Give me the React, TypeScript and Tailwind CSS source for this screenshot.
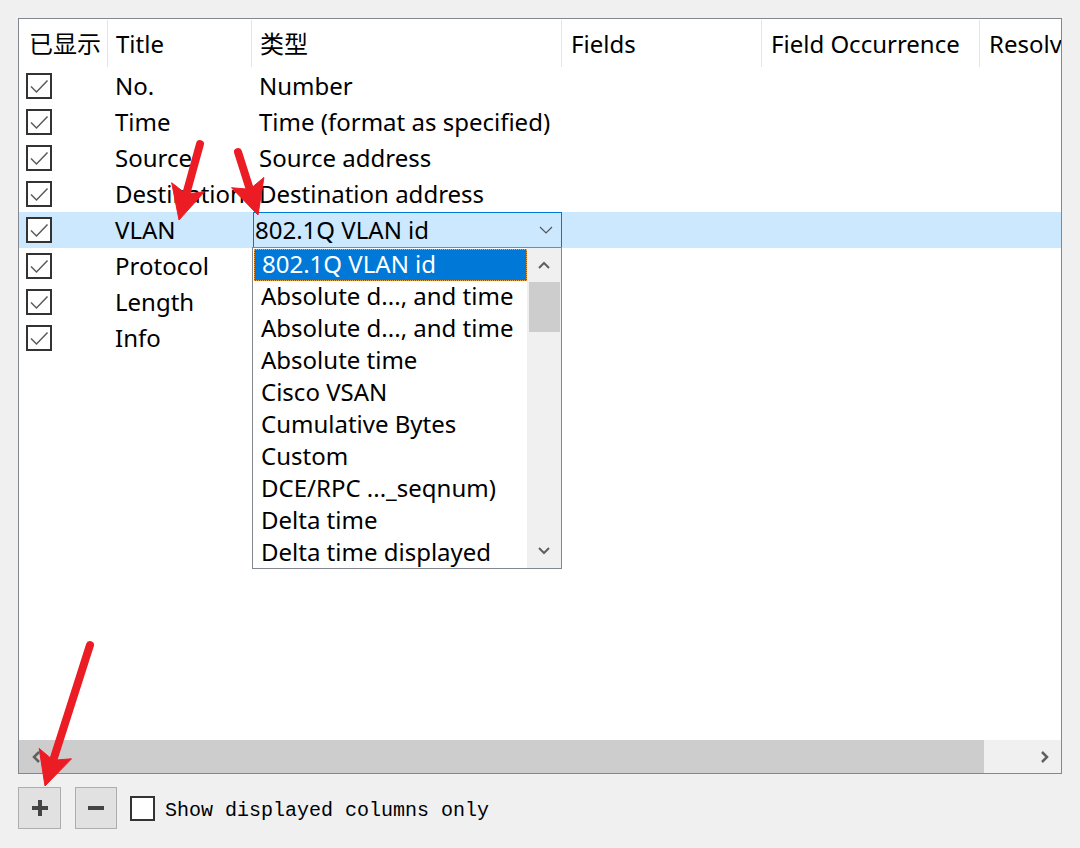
const sans = { fontFamily: '"Noto Sans", "Noto Sans CJK SC", sans-serif' }

interface Row {
  title: string
  type: string
}

const rows: Row[] = [
  { title: 'No.', type: 'Number' },
  { title: 'Time', type: 'Time (format as specified)' },
  { title: 'Source', type: 'Source address' },
  { title: 'Destination', type: 'Destination address' },
  { title: 'VLAN', type: '802.1Q VLAN id' },
  { title: 'Protocol', type: '' },
  { title: 'Length', type: '' },
  { title: 'Info', type: '' },
]

const options = [
  '802.1Q VLAN id',
  'Absolute d..., and time',
  'Absolute d..., and time',
  'Absolute time',
  'Cisco VSAN',
  'Cumulative Bytes',
  'Custom',
  'DCE/RPC ..._seqnum)',
  'Delta time',
  'Delta time displayed',
]

const headers = [
  { label: '已显示', w: 'w-[89px]', pl: 'pl-[10px]' },
  { label: 'Title', w: 'w-[144px]', pl: 'pl-[8px]' },
  { label: '类型', w: 'w-[310px]', pl: 'pl-[8px]' },
  { label: 'Fields', w: 'w-[200px]', pl: 'pl-[9px]' },
  { label: 'Field Occurrence', w: 'w-[218px]', pl: 'pl-[9px]' },
]

const CheckBox = ({ checked }: { checked: boolean }) => (
  <div className="w-[26px] h-[26px] border-2 border-[#333333] bg-white flex items-center justify-center">
    {checked && (
      <svg width="20" height="20" viewBox="0 0 20 20" fill="none">
        <path d="M2 10.5 L7.5 16 L18.5 4.5" stroke="#5a5a5a" strokeWidth="1.5" />
      </svg>
    )}
  </div>
)

// red annotation arrow, tail -> tip
const Arrow = ({ x1, y1, x2, y2 }: { x1: number; y1: number; x2: number; y2: number }) => {
  const len = Math.hypot(x2 - x1, y2 - y1)
  const dx = (x2 - x1) / len
  const dy = (y2 - y1) / len
  const nx = -dy
  const ny = dx
  const head = 34
  const half = 17
  const bx = x2 - dx * head
  const by = y2 - dy * head
  const ix = bx + dx * 7
  const iy = by + dy * 7
  const pts = [
    [x2, y2],
    [bx + nx * half, by + ny * half],
    [ix, iy],
    [bx - nx * half, by - ny * half],
  ]
    .map((p) => p.join(','))
    .join(' ')
  return (
    <g fill="#ec1c24" stroke="#ec1c24">
      <line x1={x1} y1={y1} x2={ix} y2={iy} strokeWidth="8" strokeLinecap="round" />
      <polygon points={pts} strokeWidth="1" strokeLinejoin="round" />
    </g>
  )
}

const App = () => {
  return (
    <div className="relative w-[1080px] h-[848px] bg-[#f0f0f0] overflow-hidden pt-[18px] pl-[18px] text-black" style={sans}>
      {/* Table panel */}
      <div className="w-[1044px] h-[756px] border border-[#828790] bg-white flex flex-col">
        {/* Header */}
        <div className="flex h-[49px] shrink-0 text-[24px]">
          {headers.map((h) => (
            <div key={h.label} className={`${h.w} flex items-center justify-between shrink-0`}>
              <span className={`${h.pl} whitespace-nowrap`}>{h.label}</span>
              <div className="w-px h-[47px] bg-[#e5e5e5]" />
            </div>
          ))}
          <div className="flex-1 flex items-center overflow-hidden">
            <span className="pl-[9px] whitespace-nowrap">Resolved</span>
          </div>
        </div>

        {/* Body */}
        <div className="relative flex-1 text-[24px]">
          {rows.map((r) => {
            const selected = r.title === 'VLAN'
            return (
              <div key={r.title} className={`flex h-[36px] items-center ${selected ? 'bg-[#cce8ff]' : ''}`}>
                <div className="w-[89px] pl-[7px] shrink-0">
                  <CheckBox checked />
                </div>
                <div className="w-[144px] pl-[7px] shrink-0 whitespace-nowrap overflow-hidden">{r.title}</div>
                {selected ? (
                  <div className="w-[310px] shrink-0 pl-px h-[36px]">
                    <div className="h-[36px] w-[309px] border border-[#0078d7] bg-[#cce8ff] flex items-center justify-between pl-px pr-[8px]">
                      <span className="whitespace-nowrap">{r.type}</span>
                      <svg width="14" height="8" viewBox="0 0 14 8" fill="none">
                        <path d="M1 1 L7 7 L13 1" stroke="#555" strokeWidth="1.2" />
                      </svg>
                    </div>
                  </div>
                ) : (
                  <div className="w-[310px] pl-[7px] shrink-0 whitespace-nowrap">{r.type}</div>
                )}
              </div>
            )
          })}

          {/* Open dropdown list */}
          <div className="absolute left-[233px] top-[179px] w-[310px] h-[322px] border border-[#828790] bg-white flex">
            <div className="flex-1 pt-px pl-px">
              {options.map((o, i) => (
                <div
                  key={i}
                  className={`h-[32px] flex items-center pl-[7px] pb-[3px] whitespace-nowrap ${
                    i === 0 ? 'bg-[#0078d7] text-white border border-dotted border-[#f0a040] pl-[6px]' : ''
                  }`}
                >
                  {o}
                </div>
              ))}
            </div>
            <div className="w-[34px] bg-[#f0f0f0] flex flex-col items-center">
              <div className="h-[34px] w-full flex items-center justify-center">
                <svg width="12" height="8" viewBox="0 0 12 8" fill="none">
                  <path d="M1 7 L6 2 L11 7" stroke="#606060" strokeWidth="2" />
                </svg>
              </div>
              <div className="h-[50px] w-[31px] bg-[#cdcdcd]" />
              <div className="flex-1" />
              <div className="h-[34px] w-full flex items-center justify-center">
                <svg width="12" height="8" viewBox="0 0 12 8" fill="none">
                  <path d="M1 1 L6 6 L11 1" stroke="#606060" strokeWidth="2" />
                </svg>
              </div>
            </div>
          </div>
        </div>

        {/* Horizontal scrollbar */}
        <div className="h-[33px] shrink-0 flex bg-[#f0f0f0]">
          <div className="w-[33px] bg-[#cdcdcd] flex items-center justify-center">
            <svg width="10" height="12" viewBox="0 0 10 12" fill="none">
              <path d="M8 1 L3 6 L8 11" stroke="#606060" strokeWidth="2.5" />
            </svg>
          </div>
          <div className="w-[932px] bg-[#cdcdcd]" />
          <div className="flex-1 flex justify-end">
            <div className="w-[33px] flex items-center justify-center">
              <svg width="10" height="12" viewBox="0 0 10 12" fill="none">
                <path d="M2 1 L7 6 L2 11" stroke="#606060" strokeWidth="2.5" />
              </svg>
            </div>
          </div>
        </div>
      </div>

      {/* Bottom controls */}
      <div className="flex items-center mt-[13px]">
        <button className="w-[43px] h-[42px] border border-[#adadad] bg-[#e1e1e1] flex items-center justify-center">
          <svg width="20" height="20" viewBox="0 0 20 20">
            <path d="M10 2 V18 M2 10 H18" stroke="#444" strokeWidth="4" />
          </svg>
        </button>
        <button className="ml-[14px] w-[42px] h-[42px] border border-[#adadad] bg-[#e1e1e1] flex items-center justify-center">
          <svg width="20" height="20" viewBox="0 0 20 20">
            <path d="M2 10 H18" stroke="#444" strokeWidth="4" />
          </svg>
        </button>
        <div className="ml-[13px] w-[25px] h-[25px] border-2 border-[#333333] bg-white" />
        <span
          className="ml-[10px] pt-[5px] text-[20px] whitespace-nowrap"
          style={{ fontFamily: '"Liberation Mono", monospace' }}
        >
          Show displayed columns only
        </span>
      </div>

      {/* Annotation arrows */}
      <svg className="absolute left-0 top-0 pointer-events-none" width="1080" height="848">
        <Arrow x1={200} y1={144} x2={179} y2={220} />
        <Arrow x1={238} y1={152} x2={258} y2={215} />
        <Arrow x1={90} y1={645} x2={45} y2={786} />
      </svg>
    </div>
  )
}

export default App
